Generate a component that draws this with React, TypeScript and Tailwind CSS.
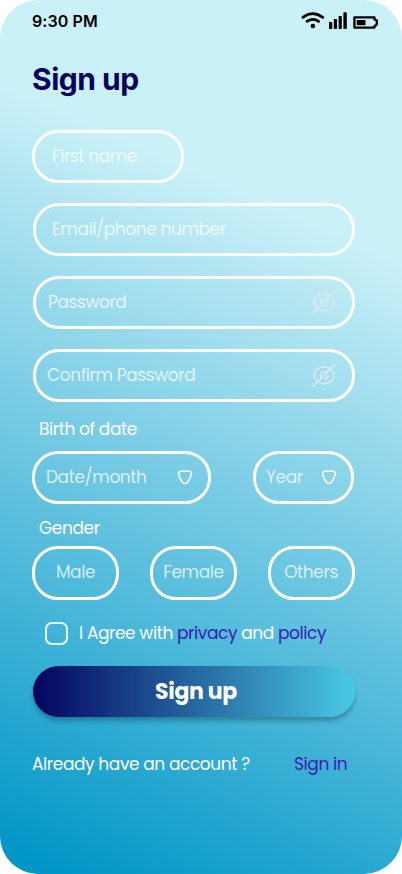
function StatusIcons() {
  return (
    <svg className="block" width="80" height="20" viewBox="0 0 80 20" fill="none">
      <g stroke="#000" strokeWidth="2.6" strokeLinecap="round">
        <path d="M2.9 8.4Q12.8 0.8 22.8 8.4" />
        <path d="M7 12.4Q12.8 8.2 18.7 12.4" />
      </g>
      <circle cx="12.9" cy="17" r="2.3" fill="#000" />
      <g fill="#000">
        <rect x="29" y="13" width="3.2" height="7" rx="0.8" />
        <rect x="33.8" y="10" width="3.2" height="10" rx="0.8" />
        <rect x="38.6" y="7" width="3.2" height="13" rx="0.8" />
        <rect x="43.4" y="3.2" width="3.4" height="16.8" rx="0.8" />
        <rect x="56.7" y="11" width="8.8" height="5.2" />
      </g>
      <path d="M54.4 8.4H74.5V10.4L76.8 11.4V15.8L74.5 17V18.6H54.4Z" stroke="#000" strokeWidth="2.3" strokeLinejoin="round" />
    </svg>
  );
}

function HiddenEye() {
  return (
    <svg className="block" width="24" height="24" viewBox="0 0 24 24" fill="none" stroke="#dceaf3" strokeWidth="1.5" strokeLinecap="round">
      <path d="M1.5 22.7L22.6 1.9" />
      <path d="M5.2 17.7C3.2 16.1 1.9 14.1 1.9 12.3C1.9 7.5 6.6 4 12 4C14.5 4 16.4 4.7 18.1 5.7" />
      <path d="M20.2 7.7C21.4 9.1 22.1 10.7 22.1 12.3C22.1 17.1 17.4 20.8 12 20.8C10.3 20.8 9 20.5 7.7 19.8" />
      <path d="M9.3 15C7.2 12.2 9 8.6 12 8.6C13.2 8.6 14.1 9 14.8 9.6" />
      <path d="M15.9 12.5C15.8 14.5 14.3 16.1 12.3 16.2" />
    </svg>
  );
}

function Caret() {
  return (
    <svg className="block" width="16" height="16" viewBox="0 0 16 16" fill="none" stroke="#fff" strokeWidth="1.5" strokeLinejoin="round">
      <path d="M3.9 2.3Q8 1.7 12.1 2.3C14.1 2.6 14.8 3.9 14.2 5.8C13.6 8.1 12.5 10.6 10.9 12.7C9 15.2 7 15.2 5.1 12.7C3.5 10.6 2.4 8.1 1.8 5.8C1.2 3.9 1.9 2.6 3.9 2.3Z" />
    </svg>
  );
}

const box = "flex items-center h-[53px] rounded-[26px] border-3 border-white pb-px whitespace-nowrap text-white/75";
const pill = "flex items-center justify-center h-[54px] w-[87px] rounded-[26px] border-3 border-white pb-[2px] text-white/75";
const link = "text-[#3a1cb4]";

export default function App() {
  return (
    <main className="flex flex-col w-[402px] h-[874px] overflow-hidden rounded-[38px] bg-[linear-gradient(204deg,#caf0f8_25%,#0096c7_98%)] font-['Poppins',sans-serif] text-[17px] leading-6 tracking-[-0.41px] text-white whitespace-nowrap">
      <header className="flex h-[42px] pl-8 pt-[9px] font-['Inter',sans-serif] text-black">
        <span className="w-[268px] text-base font-semibold tracking-[0.1px]">9:30 PM</span>
        <StatusIcons />
      </header>
      <h1 className="h-[88px] pl-8 pt-[17px] font-['Inter',sans-serif] text-[30px] leading-10 font-bold tracking-[-0.5px] text-[#03045e]">Sign up</h1>

      <div className="flex flex-col gap-5 pl-[33px]">
        <div className={`${box} -ml-px w-[152px] pl-[17px]`}>First name</div>
        <div className={`${box} w-[322px] pl-[16px]`}>Email/phone number</div>
        <div className={`${box} w-[322px] pl-[12px] pr-[16px] justify-between`}>
          <span>Password</span><HiddenEye />
        </div>
        <div className={`${box} w-[322px] pl-[11px] pr-[16px] justify-between`}>
          <span>Confirm Password</span><HiddenEye />
        </div>
      </div>

      <h2 className="h-[49px] pl-[39px] pt-[15px]">Birth of date</h2>
      <div className="flex gap-[42px] pl-8">
        <div className={`${box} w-[179px] pl-[11px] pr-[15px] justify-between`}>
          <span>Date/month</span><Caret />
        </div>
        <div className={`${box} w-[101px] pl-[10px] pr-[14px] justify-between`}>
          <span>Year</span><Caret />
        </div>
      </div>

      <h2 className="h-[42px] pl-[39px] pt-[12px]">Gender</h2>
      <div className="flex gap-[31px] pl-8">
        <div className={pill}>Male</div>
        <div className={pill}>Female</div>
        <div className={`${pill} pr-px`}>Others</div>
      </div>

      <div className="flex items-center h-[66px] pl-[45px]">
        <span className="size-[23px] rounded-[7px] border-2 border-white/90" />
        <p className="ml-[11px]">
          I Agree with <span className={link}>privacy</span> and <span className={link}>policy</span>
        </p>
      </div>

      <button className="ml-[33px] h-[51px] w-[322px] rounded-[26px] bg-[linear-gradient(90deg,#03045e,#48cae4)] pl-[4px] text-[22px] font-bold tracking-[-0.35px] shadow-[0_4px_4px_rgba(0,0,0,0.25)]">Sign up</button>

      <footer className="flex pt-[35px] pl-8">
        <span className="w-[262px]">Already have an account ?</span>
        <span className={link}>Sign in</span>
      </footer>
    </main>
  );
}
